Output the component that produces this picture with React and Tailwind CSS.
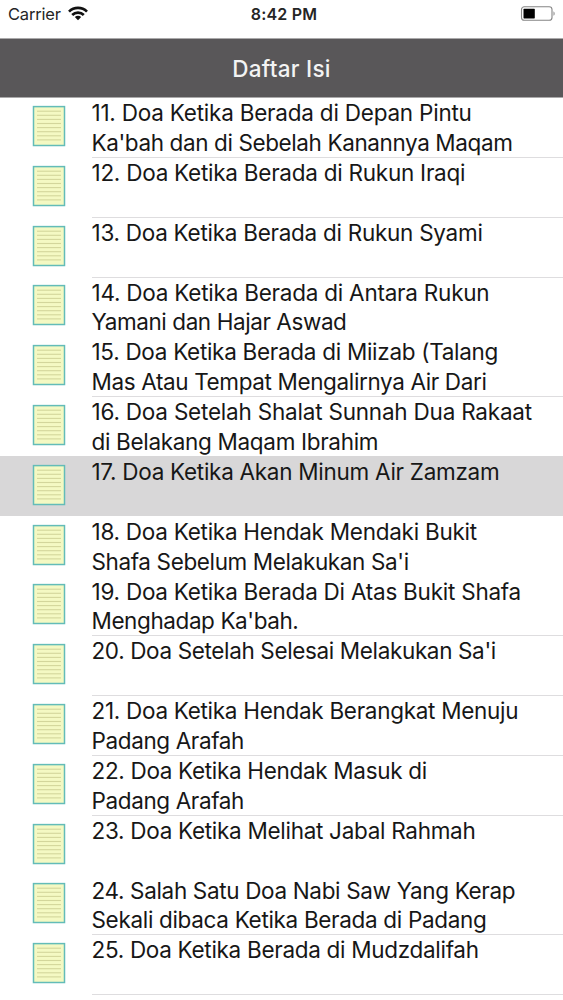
const rows = [
  {
    line: true,
    lines: [
      ["11. Doa Ketika Berada di Depan Pintu", "tracking-[-0.22px]"],
      ["Ka'bah dan di Sebelah Kanannya Maqam", "tracking-[-0.39px]"],
    ],
  },
  { line: true, lines: [["12. Doa Ketika Berada di Rukun Iraqi", "tracking-[-0.25px]"]] },
  { line: true, lines: [["13. Doa Ketika Berada di Rukun Syami", "tracking-[-0.27px]"]] },
  {
    lines: [
      ["14. Doa Ketika Berada di Antara Rukun", "tracking-[-0.23px]"],
      ["Yamani dan Hajar Aswad", "tracking-[-0.42px]"],
    ],
  },
  {
    line: true,
    lines: [
      ["15. Doa Ketika Berada di Miizab (Talang", "tracking-[-0.29px]"],
      ["Mas Atau Tempat Mengalirnya Air Dari", "tracking-[-0.37px]"],
    ],
  },
  {
    lines: [
      ["16. Doa Setelah Shalat Sunnah Dua Rakaat", "tracking-[-0.21px]"],
      ["di Belakang Maqam Ibrahim", "tracking-[-0.32px]"],
    ],
  },
  { selected: true, lines: [["17. Doa Ketika Akan Minum Air Zamzam", "tracking-[-0.28px]"]] },
  {
    lines: [
      ["18. Doa Ketika Hendak Mendaki Bukit", "tracking-[-0.26px]"],
      ["Shafa Sebelum Melakukan Sa'i", "tracking-[-0.37px]"],
    ],
  },
  {
    line: true,
    lines: [
      ["19. Doa Ketika Berada Di Atas Bukit Shafa", "tracking-[-0.24px]"],
      ["Menghadap Ka'bah.", "tracking-[-0.41px]"],
    ],
  },
  { line: true, lines: [["20. Doa Setelah Selesai Melakukan Sa'i", "tracking-[-0.36px]"]] },
  {
    line: true,
    lines: [
      ["21. Doa Ketika Hendak Berangkat Menuju", "tracking-[-0.29px]"],
      ["Padang Arafah", "tracking-[-0.38px]"],
    ],
  },
  {
    line: true,
    lines: [
      ["22. Doa Ketika Hendak Masuk di", "tracking-[-0.32px]"],
      ["Padang Arafah", "tracking-[-0.38px]"],
    ],
  },
  { lines: [["23. Doa Ketika Melihat Jabal Rahmah", "tracking-[-0.29px]"]] },
  {
    line: true,
    lines: [
      ["24. Salah Satu Doa Nabi Saw Yang Kerap", "tracking-[-0.34px]"],
      ["Sekali dibaca Ketika Berada di Padang", "tracking-[-0.32px]"],
    ],
  },
  { line: true, lines: [["25. Doa Ketika Berada di Mudzdalifah", "tracking-[-0.3px]"]] },
];

function NoteIcon() {
  return (
    <svg className="ml-8 mt-[7.5px] h-[42px] w-[34px] shrink-0" viewBox="0 0 34 42">
      <rect x="1.5" y="1.6" width="31" height="38.9" fill="#f4f9c3" stroke="#63bcb8" strokeWidth="1.5" />
      {[6.2, 10.3, 14.4, 18.5, 22.6, 26.7, 30.8, 34.9].map((y) => (
        <path key={y} d={`M5 ${y}H29`} stroke="#d3d69b" strokeWidth="1.1" />
      ))}
    </svg>
  );
}

function StatusBar() {
  return (
    <div className="grid h-[37.5px] shrink-0 grid-cols-3 items-start px-2 text-[16.5px] leading-[29px] text-[#252525]">
      <div className="flex items-start">
        <span className="tracking-[-0.2px]">Carrier</span>
        <svg className="ml-[7px] mt-[6px] h-[15px] w-[20px]" viewBox="0 0 20 15" fill="none" stroke="#111" strokeWidth="2.7">
          <path d="M1 5.6C6 .7 14 .7 19 5.6" />
          <path d="M4.2 9C7.4 5.9 12.6 5.9 15.8 9" />
          <path d="M10 14.2L6.8 11.1C8.6 9.4 11.4 9.4 13.2 11.1Z" fill="#111" stroke="none" />
        </svg>
      </div>
      <span className="pl-[5px] text-center text-[16px] font-semibold tracking-[0.2px]">8:42 PM</span>
      <svg className="ml-auto mt-[5px] h-[17px] w-[36px]" viewBox="0 0 36 17">
        <rect x="2.5" y="1.8" width="30.5" height="13.4" rx="2.8" fill="#fff" stroke="#858585" strokeWidth="1.1" />
        <rect x="4.5" y="3.8" width="11.3" height="9.6" rx="0.6" fill="#000" />
        <path d="M34.5 6.2C36 7 36 10 34.5 10.8Z" fill="#858585" />
      </svg>
    </div>
  );
}

export default function App() {
  return (
    <div className="flex h-[1000px] w-[563px] flex-col overflow-hidden bg-white font-['Inter',sans-serif] text-[#171717]">
      <StatusBar />
      <header className="flex h-[60px] shrink-0 items-center justify-center border-y border-[#aaa9aa] bg-[#595759] pt-[2px] text-[22.5px] font-medium tracking-[0.25px] text-[#f3f3f3]">
        Daftar Isi
      </header>
      <main>
        {rows.map((row) => (
          <div key={row.lines[0][0]} className={`flex h-[59.8px] ${row.selected ? "bg-[#d8d7d8]" : ""}`}>
            <NoteIcon />
            <div className={`ml-[25.5px] h-[60.5px] flex-1 whitespace-nowrap border-b pt-[0.7px] text-[22.5px] leading-[29.8px] ${row.line ? "border-[#dedddf]" : "border-transparent"}`}>
              {row.lines.map(([text, tracking]) => (
                <div key={text} className={tracking}>{text}</div>
              ))}
            </div>
          </div>
        ))}
      </main>
    </div>
  );
}
